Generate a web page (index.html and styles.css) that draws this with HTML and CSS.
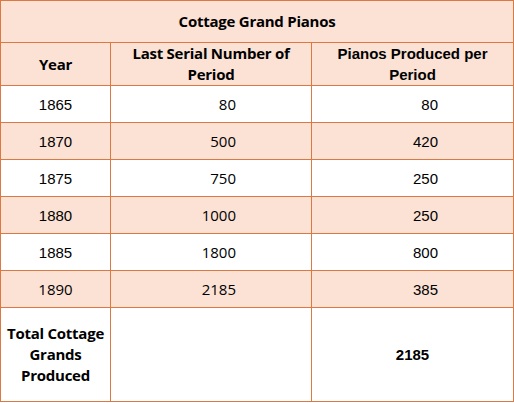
FILE: index.html
```html
<!DOCTYPE html>
<html>
<head>
<meta charset="utf-8">
<link rel="stylesheet" href="styles.css">
</head>
<body>
<table class="grid">
  <colgroup>
    <col class="c1"><col class="c2"><col class="c3">
  </colgroup>
  <tr class="row-title shade">
    <th colspan="3" class="apt">Cottage Grand Pianos</th>
  </tr>
  <tr class="row-head shade">
    <th class="apt">Year</th>
    <th class="apt">Last Serial Number of<br>Period</th>
    <th class="ari">Pianos Produced per<br>Period</th>
  </tr>
  <tr class="row-data">
    <td class="ari year">1865</td><td class="apt num">80</td><td class="ari num">80</td>
  </tr>
  <tr class="row-data shade">
    <td class="ari year">1870</td><td class="apt num">500</td><td class="ari num">420</td>
  </tr>
  <tr class="row-data">
    <td class="ari year">1875</td><td class="apt num">750</td><td class="ari num">250</td>
  </tr>
  <tr class="row-data shade">
    <td class="ari year">1880</td><td class="apt num">1000</td><td class="ari num">250</td>
  </tr>
  <tr class="row-data">
    <td class="ari year">1885</td><td class="apt num">1800</td><td class="ari num">800</td>
  </tr>
  <tr class="row-data shade">
    <td class="apt year">1890</td><td class="apt num">2185</td><td class="ari num">385</td>
  </tr>
  <tr class="row-total">
    <th class="apt">Total Cottage<br>Grands<br>Produced</th>
    <td></td>
    <td class="ari total">2185</td>
  </tr>
</table>
</body>
</html>
```
FILE: styles.css
```css
html, body {
  margin: 0;
  padding: 0;
  background: #ffffff;
}
.grid {
  border-collapse: collapse;
  table-layout: fixed;
  width: 513px;
  color: #000000;
  font-size: 15px;
}
.c1 { width: 110px; }
.c2 { width: 201px; }
.c3 { width: 202px; }
.grid th, .grid td {
  border: 1.5px solid #dc7842;
  padding: 0;
  text-align: center;
  vertical-align: middle;
}
.grid th { font-weight: 700; line-height: 21px; }
.grid th.apt { letter-spacing: -0.25px; }
.apt { font-family: "Open Sans", "Liberation Sans", sans-serif; }
.ari { font-family: "Liberation Sans", Arial, sans-serif; }
.shade { background: #fbe2d5; }
.row-title { height: 42px; }
.row-head { height: 42px; }
.row-data { height: 37px; }
.row-total { height: 94px; }
.grid td.num { text-align: right; padding-right: 75px; }
.grid td.total { font-weight: 700; }
```
